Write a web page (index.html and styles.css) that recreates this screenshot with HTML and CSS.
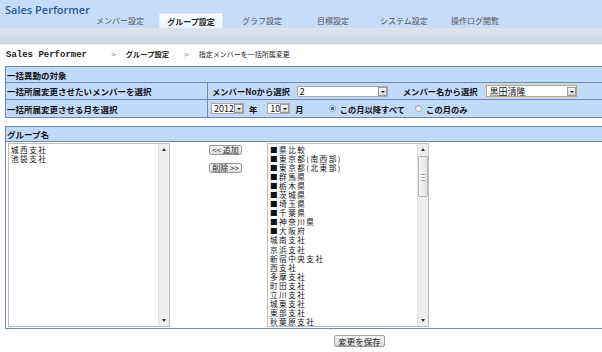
FILE: index.html
```html
<!DOCTYPE html>
<html lang="ja">
<head>
    <meta charset="UTF-8">
    <title>Sales Performer - グループ設定</title>
    <link rel="stylesheet" href="styles.css">
</head>
<body>
    <header class="topbar">
        <div class="logo">Sales Performer</div>
        <nav class="tabs">
            <a href="#">メンバー設定</a>
            <a href="#" class="active">グループ設定</a>
            <a href="#">グラフ設定</a>
            <a href="#">目標設定</a>
            <a href="#">システム設定</a>
            <a href="#">操作ログ閲覧</a>
        </nav>
    </header>
    <div class="subbar"></div>

    <div class="crumbs"><span class="crumb-en">Sales Performer</span><span class="sep sep-first">&gt;</span><b>グループ設定</b><span class="sep">&gt;</span><span>指定メンバーを一括所属変更</span></div>

    <!-- 対象の選択 -->
    <table class="grid target">
        <tr class="row-head">
            <th colspan="2">一括異動の対象</th>
        </tr>
        <tr class="row-member">
            <th class="label-col">一括所属変更させたいメンバーを選択</th>
            <td>
                <div class="field-line">
                    <span class="field-label no-label">メンバーNoから選択</span>
                    <span class="combo combo-no"><span class="combo-val">2</span><span class="combo-btn"></span></span>
                    <span class="field-label name-label">メンバー名から選択</span>
                    <span class="combo combo-name"><span class="combo-val">黒田清隆</span><span class="combo-btn"></span></span>
                </div>
            </td>
        </tr>
        <tr class="row-month">
            <th class="label-col">一括所属変更させる月を選択</th>
            <td>
                <div class="field-line">
                    <span class="combo combo-year"><span class="combo-val">2012</span><span class="combo-btn"></span></span>
                    <span class="field-label unit">年</span>
                    <span class="combo combo-month"><span class="combo-val">10</span><span class="combo-btn"></span></span>
                    <span class="field-label unit">月</span>
                    <span class="radio checked"></span>
                    <span class="field-label">この月以降すべて</span>
                    <span class="radio"></span>
                    <span class="field-label">この月のみ</span>
                </div>
            </td>
        </tr>
    </table>

    <!-- グループ -->
    <table class="grid groups">
        <tr class="row-head">
            <th>グループ名</th>
        </tr>
        <tr>
            <td class="group-body">
                <div class="group-layout">
                    <div class="listbox list-left">
                        <ul class="items">
                            <li>城西支社</li>
                            <li>池袋支社</li>
                        </ul>
                        <div class="scroll">
                            <span class="arr up"></span>
                            <span class="track"></span>
                            <span class="arr down"></span>
                        </div>
                    </div>

                    <div class="move-btns">
                        <button class="small-btn">&lt;&lt; 追加</button>
                        <button class="small-btn">削除 &gt;&gt;</button>
                    </div>

                    <div class="listbox list-right">
                        <ul class="items">
                            <li>■県比較</li>
                            <li>■東京都(南西部)</li>
                            <li>■東京都(北東部)</li>
                            <li>■群馬県</li>
                            <li>■栃木県</li>
                            <li>■茨城県</li>
                            <li>■埼玉県</li>
                            <li>■千葉県</li>
                            <li>■神奈川県</li>
                            <li>■大阪府</li>
                            <li>城南支社</li>
                            <li>京浜支社</li>
                            <li>新宿中央支社</li>
                            <li>西支社</li>
                            <li>多摩支社</li>
                            <li>町田支社</li>
                            <li>立川支社</li>
                            <li>城東支社</li>
                            <li>東部支社</li>
                            <li>秋葉原支社</li>
                        </ul>
                        <div class="scroll">
                            <span class="arr up"></span>
                            <span class="track"><span class="thumb"></span></span>
                            <span class="arr down"></span>
                        </div>
                    </div>
                </div>
            </td>
        </tr>
    </table>

    <div class="actions">
        <button class="small-btn save-btn">変更を保存</button>
    </div>
</body>
</html>
```

FILE: styles.css
```css
:root {
    --header-blue: #c5ddfb;
    --cell-blue: #c2dafa;
    --line-blue: #6f88b8;
    --text-color: #111;
}

* {
    margin: 0;
    padding: 0;
    box-sizing: border-box;
}

body {
    font-family: "Noto Sans CJK JP", sans-serif;
    font-size: 9px;
    color: var(--text-color);
    background: #fff;
    overflow: hidden;
}

/* header */
.topbar {
    height: 28px;
    background: var(--header-blue);
    display: flex;
    align-items: flex-end;
}

.logo {
    align-self: flex-start;
    width: 83px;
    margin: 2px 0 0 5px;
    font-family: "Open Sans", sans-serif;
    font-size: 11px;
    font-weight: 600;
    color: #2c5a97;
    white-space: nowrap;
}

.tabs {
    display: flex;
    gap: 7px;
}

.tabs a {
    width: 64px;
    height: 15px;
    line-height: 15px;
    text-align: center;
    font-size: 8px;
    color: #555;
    text-decoration: none;
}

.tabs a.active {
    background: linear-gradient(#fbfdff, #e9f1fb);
    border: 1px solid #dfe8f3;
    border-bottom: none;
    color: #222;
    font-weight: bold;
}

.subbar {
    height: 17px;
    background: linear-gradient(#dde4ed, #cbd5e0);
    border-bottom: 1px solid #eef2f6;
}

/* breadcrumb */
.crumbs {
    height: 21px;
    padding: 2px 0 0 6px;
    line-height: 14px;
    font-size: 7px;
    color: #222;
    white-space: nowrap;
}

.crumb-en {
    font-family: "Liberation Mono", monospace;
    font-size: 9px;
    font-weight: bold;
}

.crumbs .sep {
    font-family: "Liberation Sans", sans-serif;
    font-size: 8px;
    color: #777;
    margin: 0 10px 0 15px;
}

.crumbs .sep-first {
    margin: 0 10px 0 24px;
}

.crumbs b {
    font-size: 7.3px;
}

/* tables */
.grid {
    border-collapse: collapse;
    margin-left: 5px;
    width: 600px;
}

.grid th,
.grid td {
    border: 1px solid var(--line-blue);
    background: var(--cell-blue);
    text-align: left;
    vertical-align: middle;
    padding: 0 1px;
    font-size: 8.5px;
    font-weight: bold;
    white-space: nowrap;
}

.target .row-head th { height: 16px; }
.target .row-member th, .target .row-member td { height: 17px; }
.target .row-month th, .target .row-month td { height: 18px; }

.label-col {
    width: 202px;
}

.target td {
    padding-left: 4px;
}

.field-line {
    display: flex;
    align-items: center;
}

.field-label {
    font-size: 8.3px;
    font-weight: bold;
}

.no-label { margin-right: 7px; }
.name-label { margin: 0 9px 0 15px; }
.unit { margin: 0 10px 0 5px; }

/* fake combo boxes */
.combo {
    display: flex;
    height: 11px;
    border: 1px solid #a9a9a9;
    background: #fff;
    align-items: center;
}

.combo-val {
    flex: 1;
    padding-left: 2px;
    font-size: 9px;
    font-weight: normal;
    line-height: 9px;
}

.combo-btn {
    position: relative;
    width: 9px;
    height: 9px;
    background: linear-gradient(#f4f4f4, #d8d8d8);
    border: 1px solid #9a9a9a;
}

.combo-btn::after {
    content: "";
    position: absolute;
    left: 2px;
    top: 3px;
    border-left: 2px solid transparent;
    border-right: 2px solid transparent;
    border-top: 2px solid #111;
}

.combo-no { width: 91px; }
.combo-name { width: 91px; height: 12px; border-color: #c5a56b; }
.combo-year { width: 33px; margin-left: -1px; }
.combo-month { width: 23px; }

.radio {
    width: 7px;
    height: 7px;
    border-radius: 50%;
    border: 1px solid #a0a0a0;
    background: linear-gradient(#e8e8e8, #fff);
    margin: 0 4px 0 15px;
}

.radio.checked {
    background: radial-gradient(circle, #2f6fc0 40%, #dfe9f5 45%);
    border-color: #8aa0bc;
}

.radio + .field-label + .radio {
    margin-left: 10px;
}

/* group table */
.groups {
    margin-top: 8px;
}

.groups .row-head th {
    height: 15px;
    padding-left: 1px;
}

.groups .group-body {
    background: #fff;
    height: 187px;
    padding: 0;
    vertical-align: top;
}

.group-layout {
    display: flex;
    align-items: flex-start;
    padding: 1px 0 0 2px;
}

.listbox {
    display: flex;
    width: 162px;
    height: 184px;
    border: 1px solid #bdbdbd;
    background: #fff;
}

.items {
    flex: 1;
    list-style: none;
    padding: 1px 0 0 2px;
    font-size: 7.6px;
    font-weight: normal;
    line-height: 9.05px;
    letter-spacing: 1.5px;
    color: #111;
    overflow: hidden;
}

.scroll {
    width: 11px;
    display: flex;
    flex-direction: column;
    align-items: center;
    background: #eeeeee;
    border-left: 1px solid #e2e2e2;
}

.arr {
    width: 0;
    height: 0;
    margin: 4px 0;
    border-left: 2px solid transparent;
    border-right: 2px solid transparent;
}

.arr.up { border-bottom: 3px solid #333; }
.arr.down { border-top: 3px solid #333; }

.track {
    flex: 1;
    width: 100%;
}

.thumb {
    display: block;
    height: 41px;
    margin-top: 1px;
    border: 1px solid #b5b5b5;
    border-radius: 2px;
    background: linear-gradient(90deg, #f6f6f6, #e2e2e2);
    position: relative;
}

.thumb::after {
    content: "";
    position: absolute;
    left: 2px;
    right: 2px;
    top: 17px;
    height: 5px;
    border-top: 1px solid #999;
    border-bottom: 1px solid #999;
    background: linear-gradient(#fff 40%, #999 40%, #999 60%, #fff 60%);
}

.move-btns {
    display: flex;
    flex-direction: column;
    gap: 8px;
    margin: 2px 0 0 39px;
    width: 58px;
}

.small-btn {
    width: 33px;
    height: 10px;
    font-family: "Noto Sans CJK JP", sans-serif;
    font-size: 8px;
    line-height: 8px;
    color: #222;
    background: linear-gradient(#f6f6f6, #dcdcdc);
    border: 1px solid #9c9c9c;
    border-radius: 2px;
    white-space: nowrap;
}

.actions {
    padding: 6px 0 0 334px;
}

.save-btn {
    width: 51px;
    height: 12px;
    font-size: 8.5px;
}
```
